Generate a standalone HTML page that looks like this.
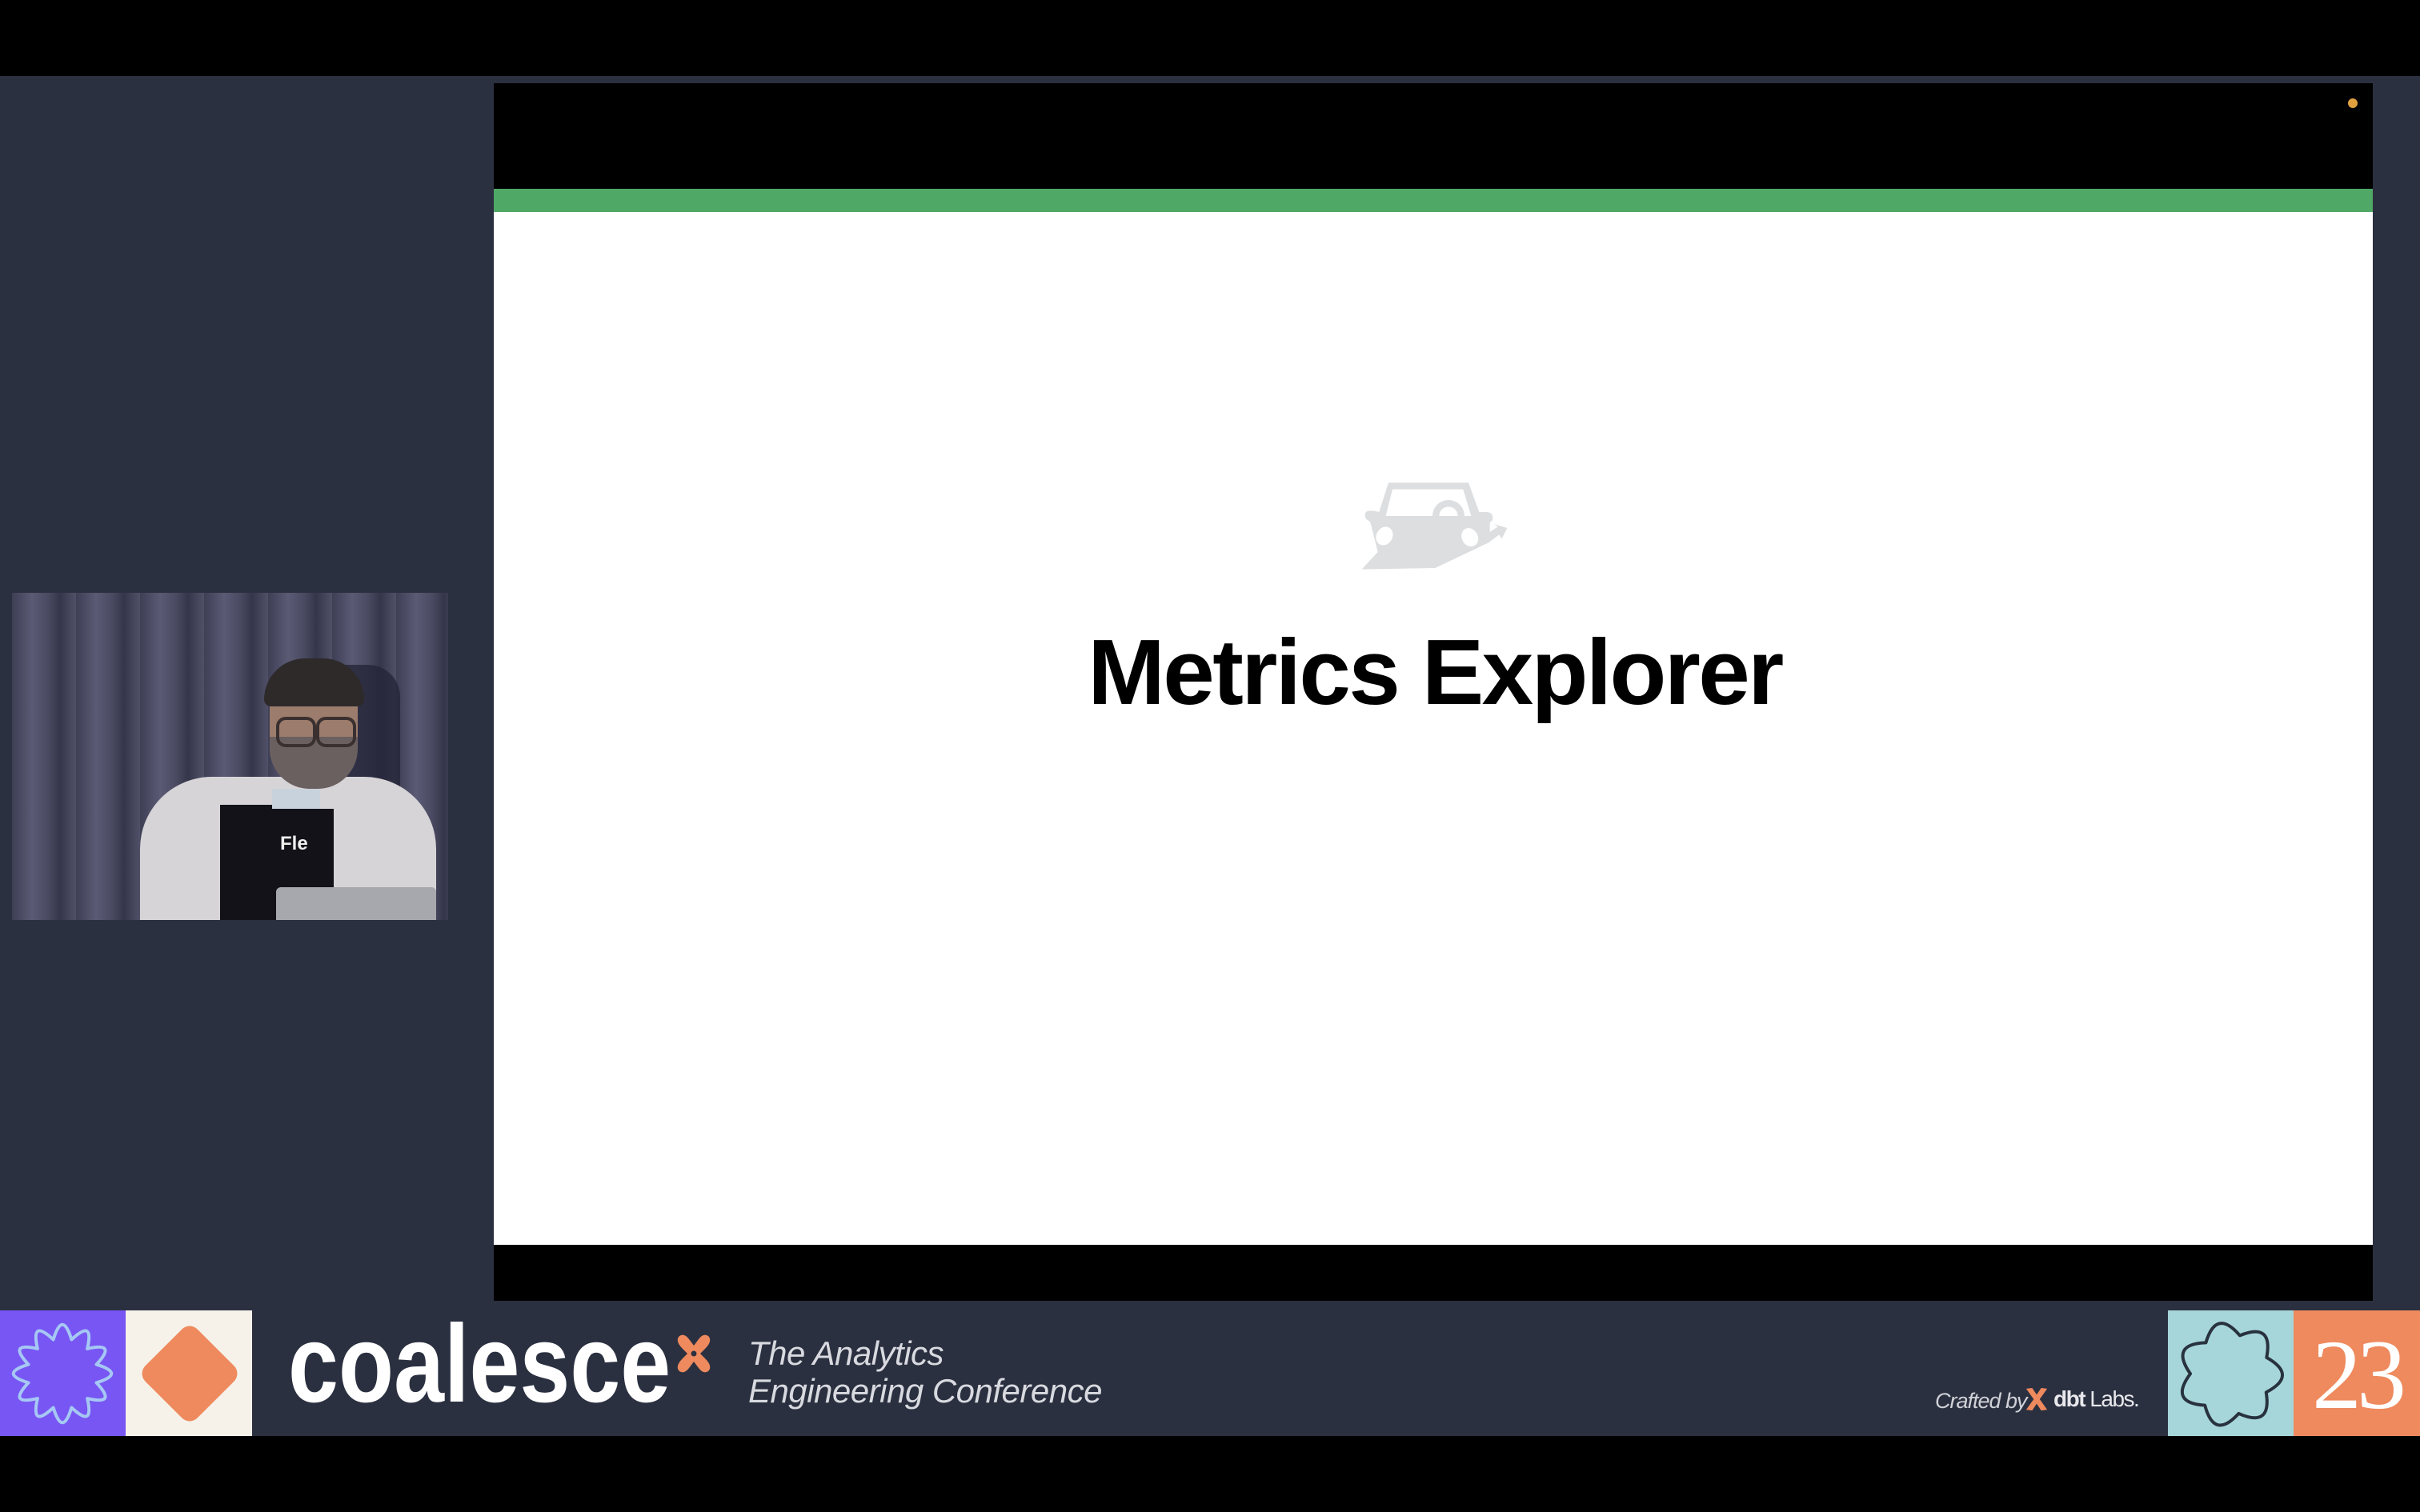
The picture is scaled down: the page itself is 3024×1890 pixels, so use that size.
<!DOCTYPE html>
<html><head><meta charset="utf-8">
<style>
html,body{margin:0;padding:0}
body{width:3024px;height:1890px;position:relative;overflow:hidden;background:#2b3040;font-family:"Liberation Sans",sans-serif}
.a{position:absolute}
</style></head><body>
<div class="a" style="left:0;top:0;width:3024px;height:95px;background:#000"></div>
<div class="a" style="left:0;top:1795px;width:3024px;height:95px;background:#000"></div>
<!-- slide -->
<div class="a" style="left:617px;top:104px;width:2348px;height:1522px;background:#000"></div>
<div class="a" style="left:617px;top:236px;width:2348px;height:29px;background:#4fa866"></div>
<div class="a" style="left:617px;top:265px;width:2348px;height:1291px;background:#fff"></div>
<div class="a" style="left:2934px;top:123px;width:12px;height:12px;border-radius:50%;background:#e0a040"></div>
<!-- car icon -->
<svg class="a" style="left:1680px;top:590px" width="220" height="140" viewBox="0 0 660 420">
<path fill="#dcdee0" d="M165 40 H465 L505 150 H530 Q560 150 555 180 L545 190 L545 225 L575 205 L560 195 L610 210 L590 250 L580 235 L540 265 L340 360 L65 365 L125 300 L100 200 L95 185 Q70 175 80 150 Q95 140 130 150 Z"/>
<path fill="#fff" d="M180 65 H445 L475 165 H155 Z"/>
<path fill="#dcdee0" d="M330 165 A60 60 0 0 1 450 165 H425 A35 35 0 0 0 355 165 Z"/>
<ellipse cx="150" cy="240" rx="30" ry="36" fill="#fff" transform="rotate(30 150 240)"/>
<ellipse cx="470" cy="245" rx="30" ry="36" fill="#fff" transform="rotate(-30 470 245)"/>
</svg>
<div class="a" style="left:1200px;top:770px;width:1186px;text-align:center;font-weight:bold;font-size:116px;letter-spacing:-2.6px;line-height:140px;color:#000">Metrics Explorer</div>
<!-- webcam -->
<div class="a" style="left:15px;top:741px;width:545px;height:409px;overflow:hidden;background:repeating-linear-gradient(90deg,#3e3f55 0,#5a5a74 25px,#4a4a62 45px,#35364a 60px,#505068 80px);">
 <div class="a" style="left:375px;top:90px;width:110px;height:280px;background:#25263a;border-radius:40px;opacity:.8"></div>
 <div class="a" style="left:160px;top:230px;width:370px;height:200px;background:#d6d4d6;border-radius:90px 90px 0 0"></div>
 <div class="a" style="left:325px;top:245px;width:60px;height:170px;background:#c8d2dc"></div>
 <div class="a" style="left:322px;top:270px;width:80px;height:150px;background:#121218"></div>
 <div class="a" style="left:260px;top:265px;width:65px;height:150px;background:#121218"></div>
 <div class="a" style="left:335px;top:300px;color:#eee;font-weight:bold;font-size:24px">Fle</div>
 <div class="a" style="left:322px;top:95px;width:110px;height:140px;background:#9c7c6c;border-radius:45px 45px 50px 50px"></div>
 <div class="a" style="left:322px;top:180px;width:110px;height:65px;background:#6b6060;border-radius:0 0 50px 50px"></div>
 <div class="a" style="left:315px;top:82px;width:125px;height:60px;background:#2e2a2a;border-radius:60px 60px 10px 10px"></div>
 <div class="a" style="left:330px;top:155px;width:42px;height:30px;border:4px solid #3a3030;border-radius:12px"></div>
 <div class="a" style="left:380px;top:155px;width:42px;height:30px;border:4px solid #3a3030;border-radius:12px"></div>
 <div class="a" style="left:330px;top:368px;width:200px;height:45px;background:#a6a8ae;border-radius:6px 6px 0 0"></div>
</div>
<!-- footer -->
<div class="a" style="left:0;top:1638px;width:157px;height:157px;background:#7856f3"></div>
<svg class="a" style="left:0;top:1638px" width="157" height="157" viewBox="-78 -79 157 157">
<path fill="none" stroke="#a6c8f4" stroke-width="4" stroke-linejoin="round" d="M 42.5,-11.4 Q 80,0 42.5,11.4 Q 69.3,40 31.1,31.1 Q 40,69.3 11.4,42.5 Q 0,80 -11.4,42.5 Q -40,69.3 -31.1,31.1 Q -69.3,40 -42.5,11.4 Q -80,0 -42.5,-11.4 Q -69.3,-40 -31.1,-31.1 Q -40,-69.3 -11.4,-42.5 Q 0,-80 11.4,-42.5 Q 40,-69.3 31.1,-31.1 Q 69.3,-40 42.5,-11.4 Z"/>
</svg>
<div class="a" style="left:157px;top:1638px;width:158px;height:157px;background:#f6f2ea"></div>
<div class="a" style="left:190px;top:1670px;width:94px;height:94px;background:#ee8a5e;border-radius:14px;transform:rotate(45deg) scale(.98)"></div>
<div class="a" style="left:360px;top:1620px;font-weight:bold;font-size:138px;color:#fff;line-height:170px;transform:scaleX(0.82);transform-origin:0 0">coalesce</div>
<svg class="a" style="left:843px;top:1666px" width="48" height="52" viewBox="0 0 48 52">
<path d="M6 4 Q12 0 18 8 L24 16 L30 8 Q36 0 42 4 Q48 10 38 20 L32 26 L38 32 Q48 42 42 48 Q36 52 30 44 L24 36 L18 44 Q12 52 6 48 Q0 42 10 32 L16 26 L10 20 Q0 10 6 4 Z" fill="#ee8a5e"/>
<circle cx="24" cy="26" r="3.5" fill="#2b3040"/>
</svg>
<div class="a" style="left:935px;top:1668px;font-style:italic;font-size:42px;letter-spacing:-0.5px;color:#d8dae0;line-height:47px">The Analytics<br>Engineering Conference</div>
<div class="a" style="left:2418px;top:1734px;font-style:italic;font-size:27px;letter-spacing:-1px;color:#d0d2d8;line-height:34px">Crafted by</div>
<svg class="a" style="left:2530px;top:1733px" width="30" height="32" viewBox="0 0 32 32">
<path d="M2 2 L12 16 L2 30 L10 31 L16 22 L22 31 L30 30 L20 16 L30 2 L22 1 L16 10 L10 1 Z" fill="#ee8a5e"/>
</svg>
<div class="a" style="left:2566px;top:1732px;font-size:28px;color:#e8e8ec;line-height:34px;letter-spacing:-1.5px"><b>dbt</b> Labs.</div>
<div class="a" style="left:2709px;top:1638px;width:157px;height:157px;background:#a6d6da"></div>
<svg class="a" style="left:2709px;top:1638px" width="157" height="157" viewBox="-78 -80 157 157">
<path fill="none" stroke="#28323e" stroke-width="4" stroke-linejoin="round" transform="rotate(-12)" d="M -21.7,-45.1 Q 0,-85 21.7,-45.1 Q 66.4,-53.1 48.7,-11.2 Q 82.9,19 39.1,31.2 Q 36.9,76.6 0,50 Q -36.9,76.6 -39.1,31.2 Q -82.9,19 -48.7,-11.2 Q -66.4,-53.1 -21.7,-45.1 Z"/>
</svg>
<div class="a" style="left:2866px;top:1638px;width:158px;height:157px;background:#ee8a5e"></div>
<div class="a" style="left:2866px;top:1646px;width:158px;text-align:center;font-family:'Liberation Serif',serif;font-size:124px;font-weight:300;color:#fff;line-height:145px;letter-spacing:-6px">23</div>
</body></html>
